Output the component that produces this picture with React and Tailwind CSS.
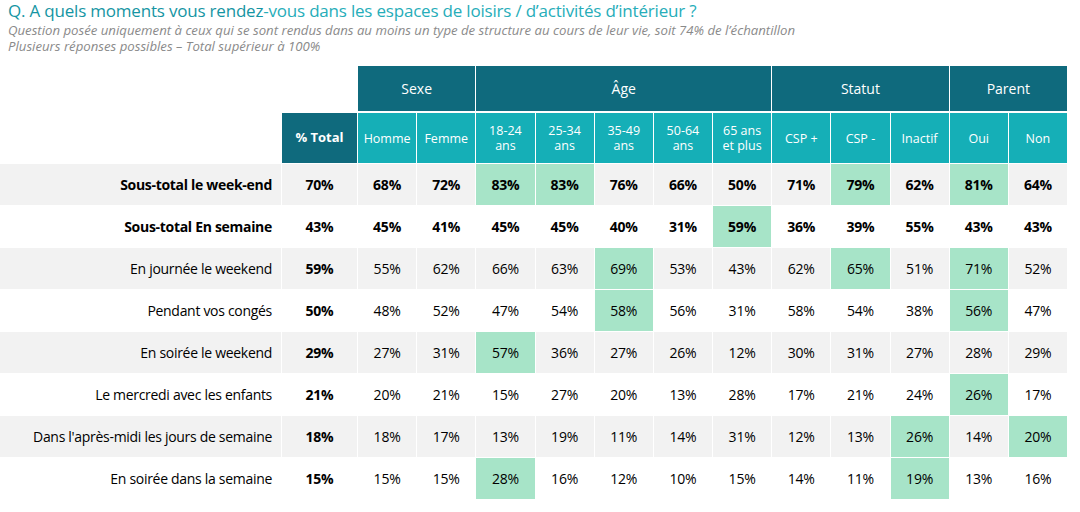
import React from 'react';

// colonnes : 0 = % Total, puis Homme, Femme, 18-24, 25-34, 35-49, 50-64, 65+, CSP+, CSP-, Inactif, Oui, Non
const rows = [
  { label: 'Sous-total le week-end', bold: true, vals: [70, 68, 72, 83, 83, 76, 66, 50, 71, 79, 62, 81, 64], hi: [3, 4, 9, 11] },
  { label: 'Sous-total En semaine', bold: true, vals: [43, 45, 41, 45, 45, 40, 31, 59, 36, 39, 55, 43, 43], hi: [7] },
  { label: 'En journée le weekend', vals: [59, 55, 62, 66, 63, 69, 53, 43, 62, 65, 51, 71, 52], hi: [5, 9, 11] },
  { label: 'Pendant vos congés', vals: [50, 48, 52, 47, 54, 58, 56, 31, 58, 54, 38, 56, 47], hi: [5, 11] },
  { label: 'En soirée le weekend', vals: [29, 27, 31, 57, 36, 27, 26, 12, 30, 31, 27, 28, 29], hi: [3] },
  { label: 'Le mercredi avec les enfants', vals: [21, 20, 21, 15, 27, 20, 13, 28, 17, 21, 24, 26, 17], hi: [11] },
  { label: "Dans l'après-midi les jours de semaine", vals: [18, 18, 17, 13, 19, 11, 14, 31, 12, 13, 26, 14, 20], hi: [10, 12] },
  { label: 'En soirée dans la semaine', vals: [15, 15, 15, 28, 16, 12, 10, 15, 14, 11, 19, 13, 16], hi: [3, 10] },
];

const groups = [
  { name: 'Sexe', span: 'col-span-2' },
  { name: 'Âge', span: 'col-span-5' },
  { name: 'Statut', span: 'col-span-3' },
  { name: 'Parent', span: 'col-span-2' },
];

const subs = [
  ['Homme'], ['Femme'], ['18-24', 'ans'], ['25-34', 'ans'], ['35-49', 'ans'], ['50-64', 'ans'],
  ['65 ans', 'et plus'], ['CSP +'], ['CSP -'], ['Inactif'], ['Oui'], ['Non'],
];

export default function App() {
  return (
    <div className="w-[1080px] h-[512px] bg-white overflow-hidden font-['Open_Sans',sans-serif] text-black">
      <div className="pl-2">
        <h1 className="text-[17px] leading-[22px] tracking-[-0.2px]">
          <span className="text-[#1595a3]">Q. A quels moments vous rendez</span>
          <span className="text-[#26adb9]">-vous dans les espaces de loisirs / d’activités d’intérieur ?</span>
        </h1>
        <p className="text-[13.2px] leading-[16px] italic text-[#8a8a8a]">
          Question posée uniquement à ceux qui se sont rendus dans au moins un type de structure au cours de leur vie, soit 74% de l’échantillon
        </p>
        <p className="text-[13.2px] leading-[16px] italic text-[#8a8a8a]">
          Plusieurs réponses possibles – Total supérieur à 100%
        </p>
      </div>

      <div className="mt-[12px] w-[1067px] grid grid-cols-[281px_75px_repeat(12,1fr)] gap-px bg-white">
        {/* ligne des groupes */}
        <div className="col-span-2 h-[45px]" />
        {groups.map((g) => (
          <div key={g.name} className={`${g.span} h-[45px] bg-[#0f6a7d] text-white text-[14px] flex items-center justify-center`}>
            {g.name}
          </div>
        ))}

        {/* sous-entêtes */}
        <div className="h-[50px] mt-px" />
        <div className="h-[50px] mt-px bg-[#0f6a7d] text-white text-[13px] font-bold flex items-center justify-center">% Total</div>
        {subs.map((s, i) => (
          <div key={i} className="h-[50px] mt-px bg-[#15afb7] text-white text-[12.5px] leading-[15px] flex flex-col items-center justify-center text-center">
            {s.map((l) => <span key={l}>{l}</span>)}
          </div>
        ))}

        {/* données */}
        {rows.map((r, ri) => {
          const bg = ri % 2 === 0 ? 'bg-[#f2f2f2]' : 'bg-white';
          return (
            <React.Fragment key={r.label}>
              <div className={`${bg} h-[41px] flex items-center justify-end pr-[9px] text-[14px] tracking-[-0.3px] ${r.bold ? 'font-bold' : ''}`}>
                {r.label}
              </div>
              {r.vals.map((v, ci) => (
                <div
                  key={ci}
                  className={`h-[41px] flex items-center justify-center text-[14px] tracking-[-0.2px] ${r.hi.includes(ci) ? 'bg-[#a7e4c8]' : bg} ${r.bold || ci === 0 ? 'font-bold' : ''}`}
                >
                  {v}%
                </div>
              ))}
            </React.Fragment>
          );
        })}
      </div>
    </div>
  );
}
